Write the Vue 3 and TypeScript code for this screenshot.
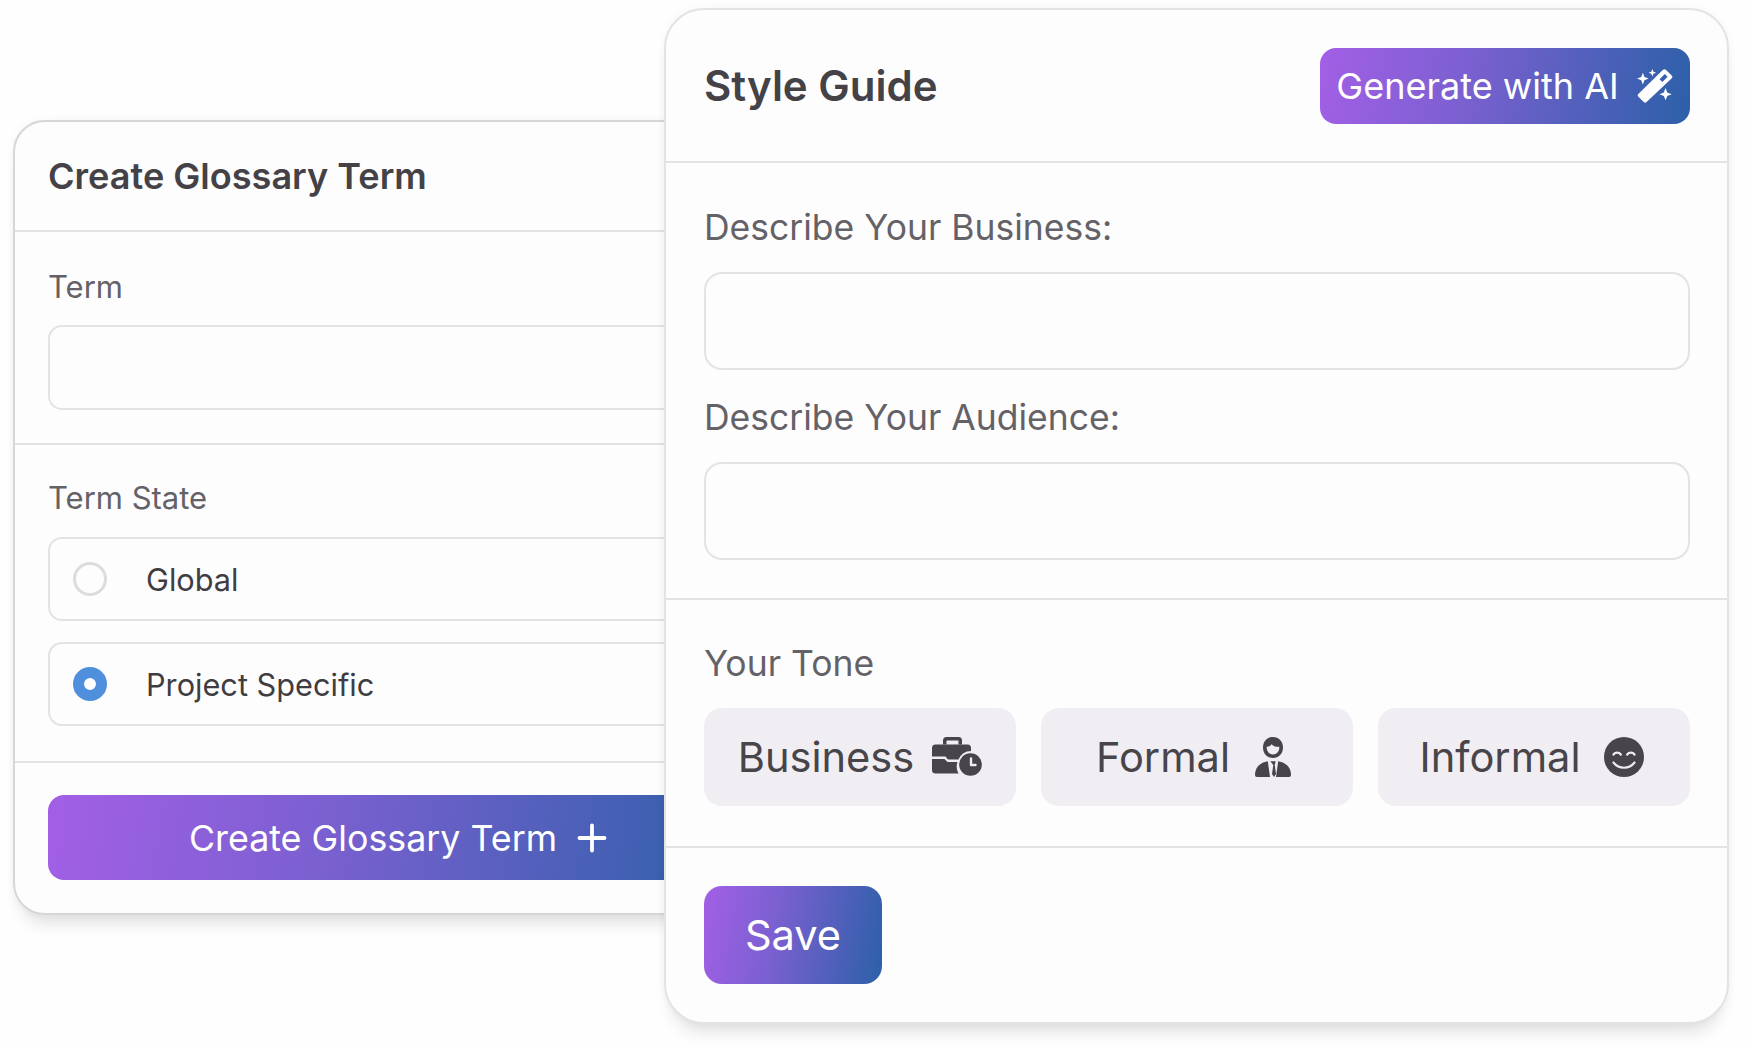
<script setup lang="ts">
interface Tone { label: string; icon: string }
const tones: Tone[] = [
  { label: 'Business', icon: 'briefcase' },
  { label: 'Formal', icon: 'person' },
  { label: 'Informal', icon: 'smile' },
]
</script>

<template>
  <div class="canvas">
    <section class="card left">
      <header class="left-head"><h2>Create Glossary Term</h2></header>
      <div class="left-term">
        <label class="lab-s">Term</label>
        <div class="field-s"></div>
      </div>
      <div class="left-state">
        <label class="lab-s">Term State</label>
        <div class="radio-row">
          <span class="radio"></span><span>Global</span>
        </div>
        <div class="radio-row">
          <span class="radio on"></span><span>Project Specific</span>
        </div>
      </div>
      <div class="left-foot">
        <button class="grad create">
          <span>Create Glossary Term</span>
          <svg width="30" height="30" viewBox="0 0 30 30"><path d="M15 2.500v25M2.500 15h25" stroke="#fff" stroke-width="3.800" stroke-linecap="round" fill="none"/></svg>
        </button>
      </div>
    </section>

    <section class="card right">
      <header class="right-head">
        <h1>Style Guide</h1>
        <button class="grad gen">
          <span>Generate with AI</span>
          <svg width="38" height="36" viewBox="0 0 36 34" fill="#fff">
            <path d="M28.200 1.600 33.900 7a1.800 1.800 0 0 1 0 2.600L10 32.200a1.800 1.800 0 0 1-2.600 0l-5.200-5a1.800 1.800 0 0 1 0-2.600L25.600 1.700a1.900 1.900 0 0 1 2.600-.1Zm-.9 4-5 4.900 2.700 2.600 4.900-4.900Z" fill-rule="evenodd"/>
            <path d="M6.500 4.500 8 8.500l4 1.500-4 1.500-1.500 4-1.500-4-4-1.500 4-1.500Z"/>
            <path d="M15.500 1l1 2.500 2.500 1-2.500 1-1 2.500-1-2.500-2.500-1 2.500-1Z"/>
            <path d="M28 19l1.600 4.200 4.200 1.600-4.200 1.600L28 30.600l-1.600-4.200-4.200-1.600 4.200-1.600Z"/>
          </svg>
        </button>
      </header>
      <div class="right-body">
        <label class="lab-l">Describe Your Business:</label>
        <div class="field-l"></div>
        <label class="lab-l second">Describe Your Audience:</label>
        <div class="field-l"></div>
      </div>
      <div class="right-tone">
        <label class="lab-l">Your Tone</label>
        <div class="tones">
          <div v-for="t in tones" :key="t.label" class="tone">
            <span>{{ t.label }}</span>
            <svg v-if="t.icon === 'briefcase'" width="50" height="40" viewBox="0 0 50 40" fill="#47444a">
              <path d="M11 7.500V3.500A3.500 3.500 0 0 1 14.500 0h12A3.500 3.500 0 0 1 30 3.500v4h-3.500V4a.5.500 0 0 0-.5-.5H15a.5.500 0 0 0-.5.500v3.500Z"/>
              <path d="M3.500 7.500h32a3.500 3.500 0 0 1 3.500 3.500v3a14 14 0 0 0-12.500 8.500H16l-2.500-3H0V11a3.500 3.500 0 0 1 3.500-3.500Z"/>
              <path d="M0 22h12.500l3 3H25.500a14 14 0 0 0 1 11.500h-23A3.500 3.500 0 0 1 0 33Z"/>
              <circle cx="38.500" cy="27.500" r="11.300"/>
              <path d="M39 21.500v6.500h4.500" fill="none" stroke="#f0eef2" stroke-width="2.400" stroke-linecap="round" stroke-linejoin="round"/>
            </svg>
            <svg v-else-if="t.icon === 'person'" width="50" height="40" viewBox="-7 0 50 40" fill="#47444a">
              <path d="M18 0c5.800 0 10 4.500 10 10.500S23.800 21 18 21 8 16.500 8 10.500 12.200 0 18 0Zm-6.300 9.800c-.2 4.700 2.600 7.600 6.300 7.600s6.500-2.900 6.300-7.600c-3.500.3-6-.7-7.800-2.600-.8 1.300-2.300 2.300-4.800 2.600Z" fill-rule="evenodd"/>
              <path d="M12.800 24.300 15 40H2a2 2 0 0 1-2-2c0-7.500 5-12.500 12.800-13.700Z"/>
              <path d="M23.200 24.300C31 25.500 36 30.500 36 38a2 2 0 0 1-2 2H21Z"/>
              <path d="M15.300 24.300h5.400l-1 3.700 1.300 9-2 3-2-3 1.300-9Z"/>
            </svg>
            <svg v-else width="50" height="40" viewBox="-5 0 50 40">
              <circle cx="20" cy="20" r="20" fill="#47444a"/>
              <path d="M9.500 17.500c1.800-2.600 5.500-2.600 7.300 0M23.200 17.500c1.800-2.600 5.500-2.600 7.300 0M9.500 25.500c5.500 7 15.500 7 21 0" fill="none" stroke="#f0eef2" stroke-width="2.200" stroke-linecap="round"/>
            </svg>
          </div>
        </div>
      </div>
      <div class="right-foot">
        <button class="grad save">Save</button>
      </div>
    </section>
  </div>
</template>

<style>
html, body { margin: 0; background: #fff; }
</style>

<style scoped>
.canvas {
  position: relative;
  width: 1746px;
  height: 1048px;
  overflow: hidden;
  background: #fefefe;
  font-family: Inter, "Noto Sans", sans-serif;
}
.card {
  position: absolute;
  box-sizing: border-box;
  background: #fefdfe;
  border: 2px solid #e3e2e5;
  display: flex;
  flex-direction: column;
  box-shadow: 0 16px 16px -8px rgba(30, 30, 40, 0.13), 0 0 10px rgba(30, 30, 40, 0.04);
}
.left {
  left: 13px;
  top: 120px;
  width: 770px;
  height: 795px;
  border-radius: 32px;
  border-color: #d6d5d8;
}
.right {
  left: 664px;
  top: 8px;
  width: 1065px;
  height: 1016px;
  border-radius: 40px;
}
h1, h2 { margin: 0; color: #444247; font-weight: 600; }
h1 { font-size: 42px; line-height: 50px; }
h2 { font-size: 36.100px; line-height: 44px; }
label { display: block; color: #646267; }
button {
  border: 0;
  padding: 0;
  color: #fff;
  font-family: inherit;
  display: flex;
  align-items: center;
  justify-content: center;
}
.grad { background: linear-gradient(100deg, #a35fe6 0%, #7a60d0 40%, #2c60a8 100%); }

.left-head {
  box-sizing: border-box;
  height: 110px;
  padding: 0 0 0 33px;
  display: flex;
  align-items: center;
  border-bottom: 2px solid #e3e2e5;
}
.left-term { padding: 35px 33px 33px; border-bottom: 2px solid #e3e2e5; }
.lab-s { font-size: 31px; line-height: 40px; margin-bottom: 18px; }
.field-s {
  box-sizing: border-box;
  height: 85px;
  border: 2px solid #e3e2e5;
  border-radius: 14px;
  background: #fefdfe;
}
.left-state {
  padding: 33px 33px 35px;
  display: flex;
  flex-direction: column;
  gap: 21px;
  border-bottom: 2px solid #e3e2e5;
}
.left-state .lab-s { margin-bottom: -2px; }
.radio-row {
  box-sizing: border-box;
  height: 84px;
  border: 2px solid #e3e2e5;
  border-radius: 14px;
  display: flex;
  align-items: center;
  padding-left: 23px;
  gap: 39px;
  color: #3f3d42;
  font-size: 30.700px;
}
.radio {
  box-sizing: border-box;
  width: 34px;
  height: 34px;
  border-radius: 50%;
  border: 3px solid #dcdbde;
  background: #fefdfe;
}
.radio.on { border: 11px solid #4f8fdc; background: #fff; }
.left-foot { padding: 32px 33px 0; }
.create {
  width: 100%;
  height: 85px;
  border-radius: 16px;
  font-size: 35.800px;
  gap: 20px;
}

.right-head {
  box-sizing: border-box;
  height: 153px;
  padding: 0 37px 0 38px;
  display: flex;
  align-items: center;
  justify-content: space-between;
  border-bottom: 2px solid #e3e2e5;
}
.gen {
  width: 370px;
  height: 76px;
  border-radius: 16px;
  font-size: 36px;
  gap: 17px;
}
.right-body { padding: 43px 37px 38px 38px; border-bottom: 2px solid #e3e2e5; }
.lab-l { font-size: 35.500px; line-height: 44px; margin-bottom: 22px; }
.lab-l.second { margin-top: 26px; }
.field-l {
  box-sizing: border-box;
  height: 98px;
  border: 2px solid #e3e2e5;
  border-radius: 18px;
  background: #fefdfe;
}
.right-tone { padding: 42px 37px 40px 38px; border-bottom: 2px solid #e3e2e5; }
.tones {
  display: grid;
  grid-template-columns: repeat(3, 1fr);
  gap: 25px;
}
.tone {
  height: 98px;
  border-radius: 18px;
  background: #f0eef2;
  color: #47444a;
  font-size: 41.600px;
  display: flex;
  align-items: center;
  justify-content: center;
  gap: 18px;
}
.tone svg { flex: none; }
.right-foot { padding: 38px 37px 0 38px; }
.save {
  width: 178px;
  height: 98px;
  border-radius: 18px;
  font-size: 41.600px;
}
</style>
